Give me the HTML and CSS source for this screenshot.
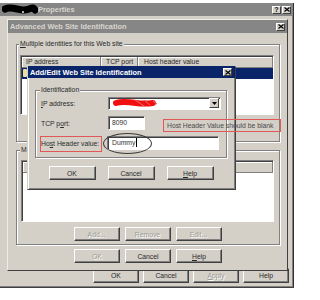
FILE: index.html
```html
<!DOCTYPE html>
<html lang="en">
<head>
    <meta charset="UTF-8">
    <meta name="viewport" content="width=device-width, initial-scale=1.0">
    <title>Advanced Web Site Identification</title>
    <link rel="stylesheet" href="styles.css">
</head>
<body>
    <div class="desk">

        <!-- Site properties (back window) -->
        <div class="win props">
            <div class="titlebar">
                <svg class="blackout" width="36" height="11" viewBox="0 0 36 11">
                    <path d="M3 5 C7 3 11 4 15 5 S22 7 27 5 S32 4 33 6" stroke="#000" stroke-width="7" fill="none" stroke-linecap="round"/>
                    <circle cx="21" cy="8" r="0.9" fill="#fff"/>
                </svg>
                <span class="title">Properties</span>
                <span class="caps">
                    <span class="cap">?</span>
                    <span class="cap"><svg width="6" height="5" viewBox="0 0 6 5"><path d="M0.5 0.5l5 4M5.5 0.5l-5 4" stroke="#000" stroke-width="1.2"/></svg></span>
                </span>
            </div>
            <div class="fill"></div>
            <div class="btnrow end">
                <button class="btn">OK</button>
                <button class="btn">Cancel</button>
                <button class="btn" disabled><u>A</u>pply</button>
                <button class="btn">Help</button>
            </div>
        </div>

        <!-- Advanced Web Site Identification -->
        <div class="win adv">
            <div class="titlebar">
                <span class="title">Advanced Web Site Identification</span>
                <span class="caps">
                    <span class="cap"><svg width="6" height="5" viewBox="0 0 6 5"><path d="M0.5 0.5l5 4M5.5 0.5l-5 4" stroke="#000" stroke-width="1.2"/></svg></span>
                </span>
            </div>
            <div class="pane">
                <fieldset class="group first">
                    <legend><u>M</u>ultiple identities for this Web site</legend>
                    <div class="listview tall">
                        <div class="lvhead">
                            <span class="col ip">IP address</span>
                            <span class="col port">TCP port</span>
                            <span class="col host">Host header value</span>
                        </div>
                        <div class="lvrow sel">
                            <span class="col ip"><i class="rowicon"></i></span>
                        </div>
                    </div>
                </fieldset>

                <fieldset class="group second">
                    <legend>M</legend>
                    <div class="listview short">
                        <div class="lvhead">
                            <span class="col ip">IP address</span>
                            <span class="col ssl"></span>
                            <span class="col host"></span>
                        </div>
                    </div>
                    <div class="btnrow">
                        <button class="btn" disabled>Add...</button>
                        <button class="btn" disabled>Remove</button>
                        <button class="btn" disabled>Edit...</button>
                    </div>
                </fieldset>

                <div class="btnrow bottom">
                    <button class="btn" disabled>OK</button>
                    <button class="btn">Cancel</button>
                    <button class="btn"><u>H</u>elp</button>
                </div>
            </div>
        </div>

        <!-- Add/Edit Web Site Identification (active) -->
        <div class="win dlg">
            <div class="titlebar active">
                <span class="title">Add/Edit Web Site Identification</span>
                <span class="caps">
                    <span class="cap"><svg width="6" height="5" viewBox="0 0 6 5"><path d="M0.5 0.5l5 4M5.5 0.5l-5 4" stroke="#000" stroke-width="1.2"/></svg></span>
                </span>
            </div>
            <div class="pane">
                <fieldset class="group ident">
                    <legend>Identification</legend>
                    <div class="form">
                        <label class="lbl"><u>I</u>P address:</label>
                        <div class="combo">
                            <span class="combo-val">
                                <svg width="46" height="10" viewBox="0 0 46 10">
                                    <path d="M3 5 C9 3 16 4 23 5 S33 6 40 5" stroke="#f01010" stroke-width="6" fill="none" stroke-linecap="round"/>
                                    <path d="M22 2 L31 8 M31 2 L37 7 M40 3 L44 6" stroke="#f06a6a" stroke-width="1" fill="none"/>
                                </svg>
                            </span>
                            <span class="drop"><svg width="5" height="3" viewBox="0 0 5 3"><path d="M0 0h5l-2.5 3z" fill="#000"/></svg></span>
                        </div>

                        <label class="lbl">TCP p<u>o</u>rt:</label>
                        <div class="field port">8090</div>

                        <label class="lbl">Ho<u>s</u>t Header value:</label>
                        <div class="field host">Dummy<span class="caret"></span></div>
                    </div>
                </fieldset>
                <div class="btnrow wide">
                    <button class="btn">OK</button>
                    <button class="btn">Cancel</button>
                    <button class="btn"><u>H</u>elp</button>
                </div>
            </div>
        </div>

        <!-- review marks drawn over the dialog -->
        <div class="mark mark-label"></div>
        <div class="mark mark-note">Host Header Value should be blank</div>
        <div class="ring"></div>
    </div>
</body>
</html>
```

FILE: styles.css
```css
* { box-sizing: border-box; }
body { margin: 0; background: #fff; font-family: "Liberation Sans", Arial, sans-serif; font-size: 6.8px; color: #2a2a2a; }
.desk { position: relative; width: 320px; height: 300px; overflow: hidden; }

/* windows */
.win { position: absolute; display: flex; flex-direction: column; background: #d4d0c8; }
.props { left: 0; top: 3px; width: 294px; height: 285px; border-right: 1px solid #303030; border-bottom: 1px solid #404040; box-shadow: inset -1px -1px 0 #808080; padding-bottom: 4px; }
.adv { left: 7px; top: 19px; width: 281px; height: 252px; border: 1px solid; border-color: #eeece6 #404040 #404040 #eeece6; }
.dlg { left: 27px; top: 66px; width: 209px; height: 124px; border: 1px solid; border-color: #d4d0c8 #404040 #404040 #d4d0c8; box-shadow: inset 1px 1px 0 #fff, inset -1px -1px 0 #808080; }

.titlebar { display: flex; align-items: center; height: 13px; padding: 0 2px 0 2px; background: #868686; color: #d8d5ce; font-weight: bold; font-size: 7.4px; }
.titlebar.active { background: #0a246a; color: #fff; height: 12px; margin-top: -1px; }
.title { flex: 1; white-space: nowrap; }
.caps { display: flex; gap: 1px; }
.cap { width: 9px; height: 8px; display: flex; align-items: center; justify-content: center; background: #d4d0c8; color: #000; font-size: 6.5px; border: 1px solid; border-color: #fff #404040 #404040 #fff; }
.dlg .caps { margin-right: 1px; }
.fill { flex: 1; }

/* buttons */
.btnrow { display: flex; gap: 5px; justify-content: center; }
.btnrow.end { justify-content: flex-end; gap: 4px; padding-right: 4px; }
.btnrow.wide { gap: 12px; margin-top: 8px; }
.btnrow.bottom { margin-top: 4px; }
.btn { width: 46px; height: 14px; padding: 0; font: inherit; color: #2a2a2a; background: #d4d0c8; border: 1px solid; border-color: #fff #404040 #404040 #fff; box-shadow: inset -1px -1px 0 #808080; }
.props .btn { height: 15px; }
.wide .btn { width: 47px; }
.btn:disabled { color: #9c9a94; text-shadow: 1px 1px 0 #fff; }

/* group boxes */
.pane { display: flex; flex-direction: column; padding: 0 7px 0 8px; }
.group { margin: 0; min-width: 0; padding: 7px 5px 7px 3px; border: 1px solid #808080; box-shadow: 1px 1px 0 #fff, inset 1px 1px 0 #fff; }
.group legend { padding: 0 1px; margin-left: -1px; height: 8px; line-height: 8px; background: #d4d0c8; white-space: nowrap; }
.first { margin-top: 7px; padding-bottom: 26px; }
.second { margin-top: 4px; padding-top: 6px; padding-bottom: 3px; padding-left: 4px; }
.group .btnrow { margin-top: 5px; }

/* list views */
.listview { background: #fff; border: 1px solid; border-color: #808080 #fff #fff #808080; box-shadow: inset 1px 1px 0 #404040; padding: 1px 0 0 1px; }
.listview.tall { height: 60px; }
.listview.short { height: 62px; }
.lvhead, .lvrow { display: flex; height: 11px; }
.lvhead .col { background: #d4d0c8; border-right: 1px solid #808080; border-bottom: 1px solid #808080; box-shadow: inset 1px 1px 0 #fff; line-height: 10px; padding-left: 4px; white-space: nowrap; }
.col.ip { width: 79px; }
.col.port { width: 37px; padding-left: 5px; }
.col.ssl { width: 40px; }
.col.host { flex: 1; padding-left: 6px; }
.lvrow.sel { background: #0a246a; }
.rowicon { display: inline-block; width: 4px; height: 8px; margin: 1px 0 0 1px; background: #e8e0a0; border-radius: 1px; }

/* Add/Edit form */
.dlg .pane { padding: 0 8px 0 7px; }
.ident { margin-top: 8px; padding: 2px 5px 7px 5px; }
.form { display: grid; grid-template-columns: 67px auto; grid-auto-rows: 14px; row-gap: 6px; align-items: center; }
.lbl { white-space: nowrap; }
.combo, .field { background: #fff; border: 1px solid; border-color: #808080 #fff #fff #808080; box-shadow: inset 1px 1px 0 #404040; }
.combo { display: flex; align-items: center; justify-content: space-between; width: 113px; height: 13px; padding: 1px 1px 1px 4px; }
.combo-val { display: flex; }
.drop { width: 10px; height: 10px; display: flex; align-items: center; justify-content: center; background: #d4d0c8; border: 1px solid; border-color: #fff #404040 #404040 #fff; }
.field { height: 14px; line-height: 12px; padding-left: 3px; color: #333; }
.field.port { width: 37px; }
.field.host { width: 112px; margin-left: -1px; padding-left: 4px; }
.caret { display: inline-block; width: 1px; height: 9px; background: #000; margin-left: 1px; vertical-align: -2px; }

/* annotations on top of the screenshot */
.mark { position: absolute; border: 1px solid #e05858; }
.mark-label { left: 40px; top: 136px; width: 62px; height: 16px; }
.mark-note { left: 163px; top: 119px; width: 118px; height: 13px; padding-left: 3px; line-height: 11px; color: #4a4a4a; white-space: nowrap; }
.ring { position: absolute; left: 103px; top: 133px; width: 49px; height: 21px; border: 1px solid #3a3a3a; border-radius: 50%; }
```
